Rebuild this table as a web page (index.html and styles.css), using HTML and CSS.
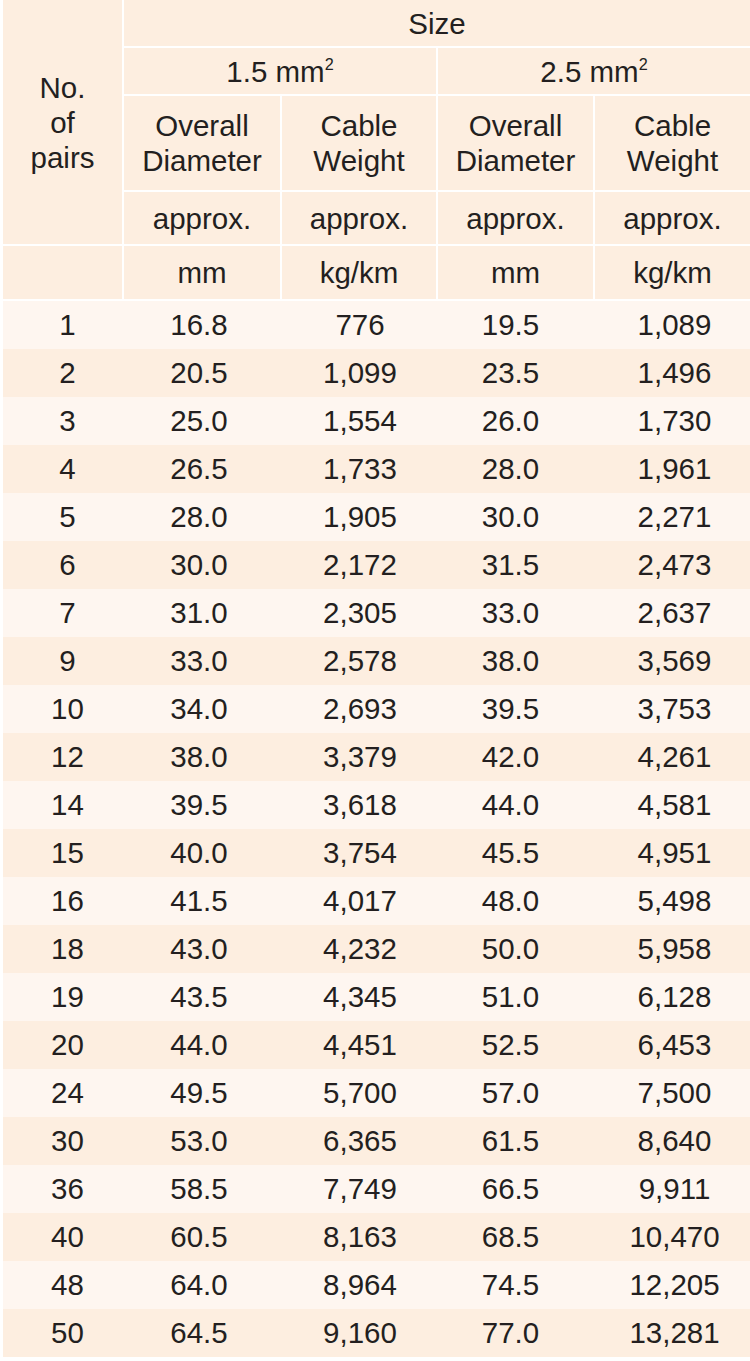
FILE: index.html
```html
<!DOCTYPE html>
<html lang="en">
<head>
<meta charset="utf-8">
<title>Cable sizes</title>
<link rel="stylesheet" href="styles.css">
</head>
<body>
<table class="spec">
  <colgroup>
    <col class="c1"><col class="c2"><col class="c3"><col class="c4"><col class="c5">
  </colgroup>
  <thead>
    <tr class="h-size">
      <th rowspan="4" class="pairs">No.<br>of<br>pairs</th>
      <th colspan="4" class="last">Size</th>
    </tr>
    <tr class="h-mm">
      <th colspan="2">1.5 mm<sup>2</sup></th>
      <th colspan="2" class="last">2.5 mm<sup>2</sup></th>
    </tr>
    <tr class="h-name">
      <th>Overall<br>Diameter</th>
      <th>Cable<br>Weight</th>
      <th>Overall<br>Diameter</th>
      <th class="last">Cable<br>Weight</th>
    </tr>
    <tr class="h-approx">
      <th>approx.</th>
      <th>approx.</th>
      <th>approx.</th>
      <th class="last">approx.</th>
    </tr>
    <tr class="h-unit">
      <th></th>
      <th>mm</th>
      <th>kg/km</th>
      <th>mm</th>
      <th class="last">kg/km</th>
    </tr>
  </thead>
  <tbody>
    <tr><td>1</td><td>16.8</td><td>776</td><td>19.5</td><td>1,089</td></tr>
    <tr><td>2</td><td>20.5</td><td>1,099</td><td>23.5</td><td>1,496</td></tr>
    <tr><td>3</td><td>25.0</td><td>1,554</td><td>26.0</td><td>1,730</td></tr>
    <tr><td>4</td><td>26.5</td><td>1,733</td><td>28.0</td><td>1,961</td></tr>
    <tr><td>5</td><td>28.0</td><td>1,905</td><td>30.0</td><td>2,271</td></tr>
    <tr><td>6</td><td>30.0</td><td>2,172</td><td>31.5</td><td>2,473</td></tr>
    <tr><td>7</td><td>31.0</td><td>2,305</td><td>33.0</td><td>2,637</td></tr>
    <tr><td>9</td><td>33.0</td><td>2,578</td><td>38.0</td><td>3,569</td></tr>
    <tr><td>10</td><td>34.0</td><td>2,693</td><td>39.5</td><td>3,753</td></tr>
    <tr><td>12</td><td>38.0</td><td>3,379</td><td>42.0</td><td>4,261</td></tr>
    <tr><td>14</td><td>39.5</td><td>3,618</td><td>44.0</td><td>4,581</td></tr>
    <tr><td>15</td><td>40.0</td><td>3,754</td><td>45.5</td><td>4,951</td></tr>
    <tr><td>16</td><td>41.5</td><td>4,017</td><td>48.0</td><td>5,498</td></tr>
    <tr><td>18</td><td>43.0</td><td>4,232</td><td>50.0</td><td>5,958</td></tr>
    <tr><td>19</td><td>43.5</td><td>4,345</td><td>51.0</td><td>6,128</td></tr>
    <tr><td>20</td><td>44.0</td><td>4,451</td><td>52.5</td><td>6,453</td></tr>
    <tr><td>24</td><td>49.5</td><td>5,700</td><td>57.0</td><td>7,500</td></tr>
    <tr><td>30</td><td>53.0</td><td>6,365</td><td>61.5</td><td>8,640</td></tr>
    <tr><td>36</td><td>58.5</td><td>7,749</td><td>66.5</td><td>9,911</td></tr>
    <tr><td>40</td><td>60.5</td><td>8,163</td><td>68.5</td><td>10,470</td></tr>
    <tr><td>48</td><td>64.0</td><td>8,964</td><td>74.5</td><td>12,205</td></tr>
    <tr><td>50</td><td>64.5</td><td>9,160</td><td>77.0</td><td>13,281</td></tr>
  </tbody>
</table>
</body>
</html>
```

FILE: styles.css
```css
html, body {
  margin: 0;
  padding: 0;
  background: #ffffff;
}

body {
  padding-left: 3px;
  font-family: "Liberation Sans", Arial, sans-serif;
  color: #231f20;
}

.spec {
  border-collapse: separate;
  border-spacing: 0;
  table-layout: fixed;
  width: 747px;
  font-size: 29.5px;
}

.c1 { width: 121px; }
.c2 { width: 158px; }
.c3 { width: 156px; }
.c4 { width: 157px; }
.c5 { width: 155px; }

.spec th {
  background: #fdeee0;
  font-weight: normal;
  text-align: center;
  vertical-align: middle;
  padding: 0;
  border-right: 2px solid #ffffff;
  border-bottom: 2px solid #ffffff;
  line-height: 35px;
}

.spec th.last {
  border-right: none;
}

.spec th sup {
  font-size: 0.55em;
  line-height: 0;
  vertical-align: 0.75em;
}

.h-size { height: 48px; }
.h-mm { height: 48px; }
.h-name { height: 96px; }
.h-approx { height: 54px; }
.h-unit { height: 55px; }

.spec td {
  height: 48px;
  padding: 0;
  text-align: center;
  vertical-align: middle;
  line-height: 48px;
  background: #fef6f0;
}

.spec td:nth-child(1) { padding-left: 8px; }
.spec td:nth-child(2) { padding-right: 8px; }
.spec td:nth-child(4) { padding-right: 12px; }
.spec td:nth-child(5) { padding-left: 4px; }

.spec tbody tr:nth-child(even) td {
  background: #fdeee0;
}
```
